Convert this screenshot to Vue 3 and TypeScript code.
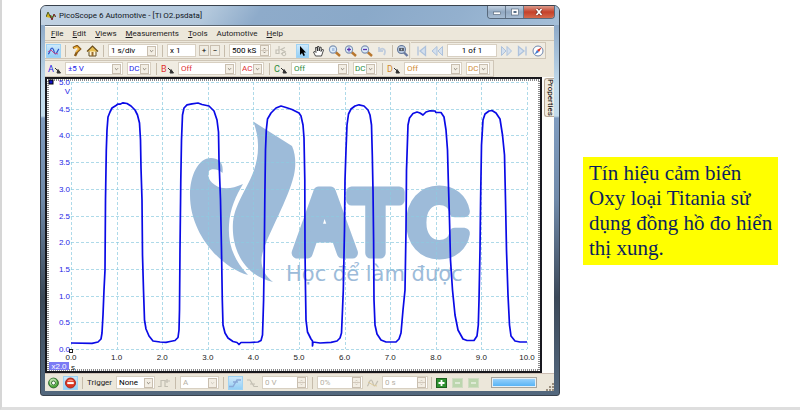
<script setup lang="ts">
import { ref } from 'vue'

interface Channel {
  name: string
  range: string
  coupling: string
  color: string
}

const menus = ['File', 'Edit', 'Views', 'Measurements', 'Tools', 'Automotive', 'Help']

const channels = ref<Channel[]>([
  { name: 'A', range: '±5 V', coupling: 'DC', color: 'blue' },
  { name: 'B', range: 'Off', coupling: 'AC', color: 'red' },
  { name: 'C', range: 'Off', coupling: 'DC', color: 'green' },
  { name: 'D', range: 'Off', coupling: 'DC', color: 'amber' },
])

const timebase = ref('1 s/div')
const zoomFactor = ref('x 1')
const samples = ref('500 kS')
const buffer = ref('1 of 1')
const trigger = ref('None')

const left = 71
const right = 527
const top = 82
const bottom = 349
const xTicks = Array.from({ length: 11 }, (_, i) => ({ x: left + ((right - left) * i) / 10, label: i.toFixed(1) }))
const yTicks = Array.from({ length: 11 }, (_, i) => ({ y: bottom - ((bottom - top) * i) / 10, label: (i / 2).toFixed(1) }))

const wave = `71,343 92,343.3 98,342 101,339 102,333 103,315 104,290 105,270 105.5,200 106.3,150 107,130 108,117 110,112 112,108
116,105.5 118,104 120,104.2 123,102.8 127,103.5 131,106 135,110 137.5,115 139.5,123 140.5,140 141,168 142,200 142.5,255 143.5,290
144.5,320 146,329 149,336 153,341 160,342 166,342.4 170,341.5 175,340.5 178,337.5 179,330 179.5,310 180,250 180.8,180 181.5,140
182.5,115 184,108 187,104.8 192,103.8 198,103 202,104.5 209,106 214,111 217,120 218.5,132 219,160 220.5,200 221.5,250 222.3,300
223,325 225,333 228,338 233,341.5 237,342.5 239,344.5 241,342.5 250,342.5 258,342 261,340.5 262.5,335 263,320 263.6,300 264.2,260
264.8,200 265.5,150 266.3,130 267.5,119 271,113 276,108 281,106 286,107.5 292,109.5 299,113 301,116 303,125 304,138 304.8,180
305,250 305.5,290 306,320 307.5,332 311,339 312.5,341 312.5,346 313,342 320,343 331,342.3 337,341 340,338 341.5,333 342.5,310
343.3,290 344.5,230 345,180 346,150 347,125 348.5,114 351,109 355,106 359,104.8 364,106 368,110 370,115 371.5,125 372.3,155
373,190 373.6,240 374,300 375,325 377,334 381,340 386,342 396,342 399,339 401,333 403,310 405,290 406,230 406.5,170 408,125
409.5,118 413,113.5 417,112 420,113 423,115 426,112 430,110.8 435,111 436,112.4 441,112.5 444,117 446,130 447.5,150 448.3,180
449.5,220 450.5,260 452.5,290 455,315 458,330 463,339 467,340.5 474,340.5 477,336 478.3,325 479,300 480,250 480.6,200 481.5,145
483,120 485,114 489,111 492,110.5 496,113 500,119 502.5,135 504.5,155 505.5,200 506.5,250 508,295 509.5,325 511,336 515,341
520,342 527,342`
</script>

<template>
  <main class="slide">
    <section class="window">
      <header class="titlebar">
        <svg class="logo" viewBox="0 0 10 10"><path d="M0 6 2 1 4 5 5 7" fill="#d7b51c" stroke="#4b5a22" /><path d="M4 4 6 9 8 3 10 6" fill="#4fae3a" stroke="#7a1f28" /></svg>
        <h1>PicoScope 6 Automotive - [Ti O2.psdata]</h1>
        <div class="caption">
          <button class="cap" aria-label="Minimize"><svg viewBox="0 0 12 8"><rect x="2.500" y="4" width="7" height="2.500" fill="#fff" stroke="#4c5d70" stroke-width=".6" /></svg></button>
          <button class="cap" aria-label="Restore"><svg viewBox="0 0 12 8"><rect x="2.500" y="1" width="7" height="6" fill="#fff" stroke="#4c5d70" stroke-width=".6" /><rect x="4.500" y="3" width="3" height="2" fill="#58708a" /></svg></button>
          <button class="cap close" aria-label="Close"><svg viewBox="0 0 12 8"><path d="M3.500 1 8.500 7M8.500 1 3.500 7" stroke="#6d2a20" stroke-width="3" /><path d="M3.500 1 8.500 7M8.500 1 3.500 7" stroke="#fff" stroke-width="1.800" /></svg></button>
        </div>
      </header>

      <div class="client">
        <nav class="menubar">
          <a v-for="m in menus" :key="m" href="#" :class="{ plain: m === 'Automotive' }">{{ m }}</a>
        </nav>

        <div class="toolrow">
          <div class="group main-tools">
            <button class="tool active wide" aria-label="Scope mode"><svg viewBox="0 0 13 12"><path d="M1 9C3 9 3 3 5 3S7 9 8.500 9 10.500 5 12 4" fill="none" stroke="#2b52c8" stroke-width="1.200" /><path d="M1 7 4 5 7 8 11 9" fill="none" stroke="#c05090" /></svg></button>
            <i class="sep"></i>
            <button class="tool" aria-label="Auto setup"><svg viewBox="0 0 13 12"><path d="M3 3 7 1 10 4 7 7 5 11" fill="none" stroke="#8a5a18" stroke-width="2.400" /><path d="M4 3 7 2 9 4 6 7" fill="none" stroke="#f3b53c" stroke-width="1.400" /></svg></button>
            <button class="tool" aria-label="Home"><svg viewBox="0 0 13 12"><path d="M3 6V11H10V6" fill="#fff6d8" stroke="#5c4a22" /><path d="M1 6.500 6.500 1 12 6.500" fill="#e8bd4e" stroke="#6a4d1c" stroke-width="1.200" /><rect x="5.500" y="7" width="2" height="4" fill="#9a6a2a" /></svg></button>
            <i class="sep"></i>
            <label class="combo w50"><select v-model="timebase" aria-label="Timebase"><option>1 s/div</option><option>2 s/div</option></select><svg class="drop" viewBox="0 0 9 9"><path d="M2.500 3.500 4.500 5.500 6.500 3.500" /></svg></label>
            <i class="sep"></i>
            <input v-model="zoomFactor" class="w29" aria-label="Zoom factor" />
            <span class="pair"><button class="step" aria-label="Zoom more">+</button><button class="step" aria-label="Zoom less">−</button></span>
            <i class="sep"></i>
            <label class="combo w42"><input v-model="samples" aria-label="Samples" /><svg class="spin" viewBox="0 0 9 11"><path d="M0 5.500H9" class="line" /><path d="M3 4 4.500 2.500 6 4M3 7 4.500 8.500 6 7" /></svg></label>
            <button class="tool" aria-label="Signal options" disabled><svg viewBox="0 0 13 12"><path d="M5 1V8.500H2V5H5M11 2.500 7 4.500 11 6.500 7 9" fill="none" stroke="#c3c0b5" stroke-width="1.200" /><circle cx="10" cy="9" r="1.800" fill="none" stroke="#c3c0b5" /></svg></button>
            <i class="sep blank"></i>
            <button class="tool active" aria-label="Select"><svg viewBox="0 0 13 12"><path d="M4 1V10L6 8 7.500 11 9 10.300 7.600 7.500H10Z" fill="#000" /></svg></button>
            <button class="tool" aria-label="Pan"><svg viewBox="0 0 13 12"><path d="M3.500 11 1.500 7 3 6.500 4 7.500 3.500 2.500 5 2.500 5.500 6V1.500H7L7.200 6 8 2 9.300 2.500 9 6.500 10.500 4 11.500 5 9.500 11Z" fill="#fff" stroke="#222" stroke-width=".8" /></svg></button>
            <button v-for="z in ['window', 'in', 'out']" :key="z" class="tool" :aria-label="'Zoom ' + z"><svg viewBox="0 0 13 12"><path d="M7.500 7 12 11" stroke="#b8772e" stroke-width="2.400" /><circle cx="5" cy="4.500" r="3.600" fill="#dcebf8" stroke="#7f94b4" stroke-width="1.100" /><path v-if="z !== 'window'" d="M3 4.500H7" stroke="#5a35b0" stroke-width="1.300" /><path v-if="z === 'in'" d="M5 2.500V6.500" stroke="#5a35b0" stroke-width="1.300" /><rect v-if="z === 'window'" x="4" y="3" width="2.500" height="3" fill="#a9c2e4" /></svg></button>
            <button class="tool" aria-label="Undo zoom" disabled><svg viewBox="0 0 13 12"><path d="M3 2V6H7M3.500 5.500C6 2 11 4 8 10" fill="none" stroke="#c1cddd" stroke-width="1.800" /></svg></button>
            <i class="sep tight"></i>
            <button class="tool" aria-label="Zoom full"><svg viewBox="0 0 13 12"><path d="M7.500 7 11.500 11" stroke="#6a7aa0" stroke-width="2.400" /><circle cx="5.500" cy="4.500" r="4" fill="#b9c8de" stroke="#667a9c" stroke-width="1.100" /><path d="M4 3V6M7 3V6M5.500 3.500V4M5.500 5.500V6" stroke="#222" stroke-width="1.200" /></svg></button>
          </div>
          <div class="group nav-tools">
            <button class="tool" aria-label="First" disabled><svg viewBox="0 0 13 12"><path d="M3 1.500V10.500M10.500 1.500V10.500L5 6Z" fill="#d4e0ee" stroke="#aec2dc" stroke-width="1.300" /></svg></button>
            <button class="tool" aria-label="Previous" disabled><svg viewBox="0 0 13 12"><path d="M6 1.500V10.500L1 6ZM11.500 1.500V10.500L7 6Z" fill="#d4e0ee" stroke="#aec2dc" /></svg></button>
            <input v-model="buffer" class="page" aria-label="Buffer" />
            <button class="tool" aria-label="Next" disabled><svg viewBox="0 0 13 12"><path d="M1.500 1.500 6 6 1.500 10.500ZM7 1.500 11.500 6 7 10.500Z" fill="#d4e0ee" stroke="#aec2dc" /></svg></button>
            <button class="tool" aria-label="Last" disabled><svg viewBox="0 0 13 12"><path d="M10 1.500V10.500M2.500 1.500V10.500L8 6Z" fill="#d4e0ee" stroke="#aec2dc" stroke-width="1.300" /></svg></button>
            <button class="tool" aria-label="Navigator"><svg viewBox="0 0 13 12"><circle cx="6" cy="6" r="5" fill="#fff" stroke="#6f86ad" /><path d="M9.500 2.500 7 7 5 5Z" fill="#e03020" /><path d="M2.500 9.500 5 5 7 7Z" fill="#3d78d0" /></svg></button>
          </div>
        </div>

        <div class="toolrow">
          <div class="group channels">
            <div v-for="c in channels" :key="c.name" class="channel" :class="c.color">
              <button class="probe" :aria-label="'Channel ' + c.name">{{ c.name }}<svg viewBox="0 0 7 7"><path d="M1 1 4 4M4 2.500 6.500 6H3Z" fill="#333" stroke="#333" /></svg></button>
              <label class="combo w58"><select v-model="c.range" :aria-label="'Range ' + c.name"><option>{{ c.range }}</option></select><svg class="drop" viewBox="0 0 9 9"><path d="M2.500 3.500 4.500 5.500 6.500 3.500" /></svg></label>
              <label class="combo w24"><select v-model="c.coupling" :aria-label="'Coupling ' + c.name"><option>DC</option><option>AC</option></select><svg class="drop" viewBox="0 0 9 9"><path d="M2.500 3.500 4.500 5.500 6.500 3.500" /></svg></label>
            </div>
          </div>
        </div>

        <div class="workspace">
          <div class="view">
            <svg class="scope" viewBox="47 79 493 292" role="img" aria-label="Titania sensor waveform">
              <g class="watermark">
                <path d="M222.500 173C224 162 218 158 211 158C198 158 190 176 190 195C190 235 222 268 248 275C232 258 228 242 229 225C230 208 236 196 243 184C232 189 222 190 215 185C209 181 207 176 209 171C211 168 219 169 222.500 173Z" />
                <path d="M253.300 121.500 292 146C296 155 296 166 294 175C288 200 269 232 263.500 250C259 262 262 274 273 282C245 276 231 250 233 222C236 195 259 178 258 145C258 137 256 129 253.300 121.500Z" />
                <text class="brand" x="295 348 407" y="253">ATC</text>
                <text class="motto" x="286" y="281">Học để làm được</text>
              </g>
              <g class="grid">
                <path v-for="t in xTicks" :key="'x' + t.label" :d="`M${Math.round(t.x) + 0.5} ${top}V${bottom}`" />
                <path v-for="t in yTicks" :key="'y' + t.label" :d="`M${left} ${Math.round(t.y) + 0.5}H${right}`" />
              </g>
              <polyline class="wave" :points="wave" />
              <rect class="inset" x="48" y="80" width="491" height="290" />
              <rect x="49" y="80" width="4" height="4" fill="#1212c8" stroke="#000" />
              <g class="ylabels">
                <text v-for="t in yTicks" :key="t.label" x="70" :y="t.y + 3">{{ t.label }}</text>
                <text x="70" y="94">V</text>
              </g>
              <g class="xlabels">
                <text v-for="t in xTicks" :key="t.label" :x="t.x" y="360">{{ t.label }}</text>
                <text x="73" y="370">s</text>
              </g>
              <rect x="69.500" y="349.500" width="3" height="3" fill="#fff" stroke="#222" />
              <rect x="49" y="362" width="20" height="8" fill="#7b7bf5" />
              <text x="59" y="369" class="scale">x2.0</text>
            </svg>
          </div>
          <button class="tab">Properties</button>
        </div>

        <footer class="status">
          <button class="tool" aria-label="Start"><svg viewBox="0 0 13 13"><circle cx="6.500" cy="6.500" r="5.300" fill="#4fa83c" stroke="#28602a" /><circle cx="6" cy="5.500" r="3.800" fill="#b5dfa3" /><circle cx="6.500" cy="6.500" r="2.200" fill="#fff" stroke="#2d6a2a" /></svg></button>
          <button class="tool active" aria-label="Stop"><svg viewBox="0 0 13 13"><circle cx="6.500" cy="6.500" r="5.400" fill="#dc3520" stroke="#a02418" /><path d="M3 4.500C4 2 9 2 10 4.500" fill="#f59a86" /><rect x="3" y="5.500" width="7" height="2.200" fill="#fff" /></svg></button>
          <i class="sep"></i>
          <label class="caption-text" for="trigger">Trigger</label>
          <span class="combo w39"><select id="trigger" v-model="trigger"><option>None</option><option>Auto</option></select><svg class="drop" viewBox="0 0 9 9"><path d="M2.500 3.500 4.500 5.500 6.500 3.500" /></svg></span>
          <button class="tool" aria-label="Advanced trigger" disabled><svg viewBox="0 0 13 12"><path d="M0 9.500H3V3.500H7V9.500H10M9 2V6M7 4H12" fill="none" stroke="#c2beb2" stroke-width="1.200" /></svg></button>
          <i class="sep"></i>
          <label class="combo w39 off"><select disabled aria-label="Trigger channel"><option>A</option></select><svg class="drop" viewBox="0 0 9 9"><path d="M2.500 3.500 4.500 5.500 6.500 3.500" /></svg></label>
          <i class="sep"></i>
          <button class="tool active wide" aria-label="Rising edge"><svg viewBox="0 0 13 12"><path d="M0 9.500H4L8 3H12M4 5H9" fill="none" stroke="#8aa9d8" stroke-width="1.400" /></svg></button>
          <button class="tool" aria-label="Falling edge" disabled><svg viewBox="0 0 13 12"><path d="M1 3H4L8 9.500H12M4 7H9" fill="none" stroke="#c2beb2" stroke-width="1.200" /></svg></button>
          <label class="combo w46 off"><input value="0 V" disabled aria-label="Threshold" /><svg class="spin" viewBox="0 0 9 11"><path d="M0 5.500H9" class="line" /><path d="M3 4 4.500 2.500 6 4M3 7 4.500 8.500 6 7" /></svg></label>
          <i class="sep"></i>
          <label class="combo w46 off"><input value="0%" disabled aria-label="Pre-trigger" /><svg class="spin" viewBox="0 0 9 11"><path d="M0 5.500H9" class="line" /><path d="M3 4 4.500 2.500 6 4M3 7 4.500 8.500 6 7" /></svg></label>
          <button class="tool" aria-label="Delay" disabled><svg viewBox="0 0 13 12"><path d="M1 9C3 9 3 3 5 3S7 9 8.500 9 10.500 5 12 4" fill="none" stroke="#c2beb2" stroke-width="1.200" /><path d="M2 5 7 8 11 9" fill="none" stroke="#dccb9c" /></svg></button>
          <label class="combo w46 off"><input value="0 s" disabled aria-label="Trigger delay" /><svg class="spin" viewBox="0 0 9 11"><path d="M0 5.500H9" class="line" /><path d="M3 4 4.500 2.500 6 4M3 7 4.500 8.500 6 7" /></svg></label>
          <i class="sep tight"></i>
          <button class="tool" aria-label="Add measurement"><svg viewBox="0 0 13 12"><rect x="1.500" y="1.500" width="10" height="9" fill="#2f9230" stroke="#1e6020" /><path d="M6.500 3V9M3.500 6H9.500" stroke="#fff" stroke-width="1.800" /></svg></button>
          <button v-for="n in ['Edit', 'Delete']" :key="n" class="tool" :aria-label="n + ' measurement'" disabled><svg viewBox="0 0 13 12"><rect x="1.500" y="1.500" width="10" height="9" fill="#bcd6ae" stroke="#cfdcc2" /><path d="M4 6H9" stroke="#e2eddb" stroke-width="1.800" /></svg></button>
          <div class="progress" role="progressbar" aria-label="Capture"></div>
          <svg class="grip" viewBox="0 0 8 8"><path d="M6 0H8V2H6ZM3 3H5V5H3ZM6 3H8V5H6ZM0 6H2V8H0ZM3 6H5V8H3ZM6 6H8V8H6Z" fill="#9b8f7e" /></svg>
        </footer>
      </div>
    </section>

    <p class="note">Tín hiệu cảm biến Oxy loại Titania sử dụng đồng hồ đo hiển thị xung.</p>
  </main>
</template>

<style>
body {
  background: #fff;
}
</style>

<style scoped>
* {
  box-sizing: border-box;
}
.slide {
  display: flex;
  align-items: flex-start;
  gap: 23px;
  min-height: 100vh;
  padding: 5px 22px 11px 38px;
  border-left: 2px solid #d6d6d6;
  border-bottom: 3px solid #dedede;
  font-family: Roboto, 'Noto Sans', sans-serif;
  font-size: 8px;
}
.window {
  flex: 1;
  min-width: 0;
  padding: 0 5px 4px 4px;
  border: 1px solid #39424d;
  border-radius: 6px 6px 3px 3px;
  background: linear-gradient(#9db7d3 0, #8fabc9 20px, #c3dcec 80px, #c3dcec 110px, #7f9cbf 112px, #6f89a8 50%, #3b4857 75%, #53687e 100%);
}
.titlebar {
  display: flex;
  align-items: center;
  height: 19px;
  background: linear-gradient(125deg, #c2d2e2 0, #b3c8dc 32%, #8eabca 42%, #8aa9c9 62%, #93b0ce 80%, #a5bfd8 100%);
  margin: 0 -5px 0 -4px;
  padding: 0 4px 0 5px;
  border-radius: 5px 5px 0 0;
}
.logo {
  width: 10px;
  height: 10px;
  margin-right: 3px;
}
h1 {
  flex: 1;
  margin: 0;
  font-size: 8px;
  font-weight: 400;
  color: #10151c;
}
button {
  margin: 0;
  padding: 0;
  border: 0;
  background: none;
  font: inherit;
  color: inherit;
}
.caption {
  display: flex;
  align-self: flex-start;
  border: 1px solid #58697c;
  border-top: 0;
  border-radius: 0 0 4px 4px;
  overflow: hidden;
}
.cap {
  display: flex;
  justify-content: center;
  align-items: center;
  width: 18px;
  height: 12px;
  background: linear-gradient(#c2d1e1, #91a8c1 50%, #a7bdd3);
  border-right: 1px solid #66788c;
}
.cap svg {
  width: 12px;
  height: 8px;
}
.close {
  width: 30px;
  border: 0;
  background: linear-gradient(#dc9b8c, #c5412a 50%, #d56a4c);
}
.client {
  background: #ece7da;
  border-top: 1px solid #59646f;
}
.menubar {
  display: flex;
  gap: 9px;
  height: 15px;
  padding-left: 6px;
  align-items: center;
  border-top: 1px solid #fff;
  border-bottom: 1px solid #cfc5b4;
}
.menubar a {
  color: #1c1c1c;
  text-decoration: none;
}
.menubar a:not(.plain)::first-letter {
  text-decoration: underline;
}
.toolrow {
  display: flex;
  gap: 1px;
  height: 18px;
  padding-top: 1px;
}
.group {
  display: flex;
  align-items: center;
  gap: 3px;
  height: 17px;
  border: 1px solid #cfc6b7;
  border-left: 0;
  background: #f0ece2;
}
.main-tools {
  padding-left: 1px;
}
.nav-tools {
  padding-left: 4px;
}
.tool {
  display: flex;
  flex: none;
  align-items: center;
  justify-content: center;
  width: 13px;
  height: 14px;
}
.tool svg {
  width: 13px;
  height: 12px;
}
.tool.active {
  background: linear-gradient(#d3ebfb, #8fcdf5);
  box-shadow: inset 0 0 0 1px #9fd3f4;
}
.tool.wide {
  width: 15px;
}
.sep {
  flex: none;
  width: 1px;
  height: 12px;
  margin: 0 1px;
  background: #c6bcab;
}
.sep.blank {
  background: none;
}
.sep.tight {
  margin: 0;
}
.combo {
  display: flex;
  flex: none;
  align-items: center;
  height: 13px;
  padding-right: 1px;
  border: 1px solid #d8d0c2;
  background: #fff;
}
.combo select,
input {
  flex: 1;
  width: 100%;
  min-width: 0;
  height: 11px;
  margin: 0;
  padding: 0 0 0 2px;
  border: 0;
  outline: 0;
  appearance: none;
  background: none;
  color: inherit;
  font: inherit;
  line-height: 11px;
  opacity: 1;
}
.combo svg {
  flex: none;
  width: 9px;
  height: 10px;
  border: 1px solid #c9bfb0;
  background: #f3eee4;
  fill: none;
  stroke: #6e675c;
}
.combo .spin {
  height: 11px;
}
.line {
  stroke: #c9bfb0;
}
.w24 {
  width: 24px;
}
.w24 select {
  padding-left: 1px;
}
.w39 {
  width: 39px;
}
.w42 {
  width: 42px;
}
.w46 {
  width: 46px;
}
.w50 {
  width: 50px;
}
.w58 {
  width: 58px;
}
input.w29,
input.page {
  flex: none;
  width: 29px;
  height: 13px;
  border: 1px solid #d8d0c2;
  background: #fff;
}
input.page {
  width: 50px;
  padding: 0;
  text-align: center;
}
.pair {
  display: flex;
  gap: 1px;
}
.step {
  width: 10px;
  height: 11px;
  border: 1px solid #c9bfb0;
  line-height: 8px;
}
.off {
  color: #b5b0a4;
}
.off svg {
  stroke: #c4beb2;
}
.channels {
  padding: 0 3px;
}
.channel {
  display: flex;
  align-items: center;
  gap: 4px;
}
.channel + .channel {
  padding-left: 5px;
  margin-left: 2px;
  background: linear-gradient(#c6bcab, #c6bcab) left center / 1px 12px no-repeat;
}
.probe {
  display: flex;
  align-items: center;
  width: 13px;
  font-size: 9px;
}
.probe svg {
  width: 7px;
  height: 7px;
  margin-top: 4px;
}
.blue {
  color: #2222e8;
}
.red {
  color: #e03030;
}
.green {
  color: #2a8a3a;
}
.amber {
  color: #d08a30;
}
.workspace {
  display: flex;
  align-items: flex-start;
  gap: 2px;
  background: #fdfdfb;
}
.view {
  flex: 1;
  min-width: 0;
  border: 2px solid #17171c;
  background: #fff;
}
.scope {
  display: block;
  width: 100%;
}
.tab {
  width: 10px;
  height: 39px;
  margin-top: 1px;
  border: 1px solid #b9aa98;
  border-right: 0;
  border-radius: 3px 0 0 3px;
  background: #f0ebdf;
  writing-mode: vertical-rl;
  line-height: 8px;
}
.watermark {
  fill: #9dbbd9;
}
.brand {
  font-family: Inter, sans-serif;
  font-size: 84px;
  font-weight: 500;
  stroke: #9dbbd9;
  stroke-width: 11;
  stroke-linejoin: round;
}
.motto {
  font-family: 'DejaVu Sans', sans-serif;
  font-size: 21px;
}
.grid {
  fill: none;
  stroke: #8ccbe0;
  stroke-opacity: 0.7;
  stroke-dasharray: 3 2;
}
.wave {
  fill: none;
  stroke: #0a0ae6;
  stroke-width: 1.7;
  stroke-linejoin: round;
}
.inset {
  fill: none;
  stroke: #8c8c8c;
  stroke-width: 2;
  stroke-dasharray: 1 1;
}
.ylabels,
.xlabels,
.scale {
  font-family: 'Liberation Sans', sans-serif;
  font-size: 8px;
}
.ylabels {
  fill: #2626e6;
  text-anchor: end;
}
.xlabels {
  fill: #222;
  text-anchor: middle;
}
.scale {
  fill: #fff;
  text-anchor: middle;
}
.status {
  display: flex;
  align-items: center;
  gap: 3px;
  height: 18px;
  padding-left: 2px;
  border-top: 1px solid #cdbfb4;
}
.status .active {
  width: 15px;
}
.caption-text {
  width: 26px;
  color: #1c1c1c;
}
.progress {
  flex: 1;
  height: 11px;
  margin: 0 6px 0 8px;
  border: 1px solid #a7a49c;
  background: linear-gradient(#9fd4fb, #4fb0f5);
  box-shadow: inset 0 0 0 1px #e4eff6;
}
.grip {
  align-self: flex-end;
  width: 8px;
  height: 8px;
}
.note {
  flex: none;
  width: 195px;
  margin: 152px 0 0;
  padding: 4px 2px 4px 6px;
  background: #ff0;
  color: #0c1f5e;
  font-family: 'Liberation Serif', serif;
  font-size: 21px;
  line-height: 25px;
}
</style>
